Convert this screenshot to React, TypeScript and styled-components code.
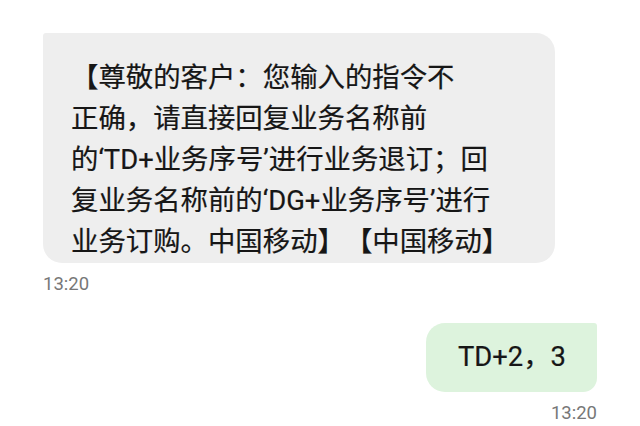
import styled, { createGlobalStyle } from "styled-components";

const GlobalStyle = createGlobalStyle`
  html, body {
    margin: 0;
    padding: 0;
    background: #ffffff;
  }
  body {
    font-family: Roboto, "Noto Sans CJK SC", "Noto Sans", sans-serif;
    -webkit-font-smoothing: antialiased;
  }
`;

const Thread = styled.div`
  display: flex;
  flex-direction: column;
  padding: 33px 43px 0 43px;
  width: 640px;
  height: 426px;
  box-sizing: border-box;
  overflow: hidden;
`;

const Message = styled.div<{ $out?: boolean }>`
  display: flex;
  flex-direction: column;
  align-items: ${(p) => (p.$out ? "flex-end" : "flex-start")};
  gap: 10px;
  margin-top: ${(p) => (p.$out ? "28px" : "0")};
`;

const Bubble = styled.div<{ $out?: boolean }>`
  box-sizing: border-box;
  font-size: 27.4px;
  line-height: 41px;
  color: #161616;
  background: ${(p) => (p.$out ? "#ddf3dd" : "#eeeeee")};
  border-radius: ${(p) => (p.$out ? "19px 3px 14px 19px" : "3px 19px 19px 19px")};
  width: ${(p) => (p.$out ? "auto" : "512px")};
  padding: ${(p) => (p.$out ? "14px 31px 14px 32px" : "25px 28px 0 28px")};
  height: ${(p) => (p.$out ? "69px" : "230px")};
  white-space: nowrap;
  text-spacing-trim: space-all;
  -webkit-text-stroke: 0.2px #161616;
`;

const Time = styled.div`
  font-size: 18.5px;
  line-height: 22px;
  color: #777777;
`;

const incoming = [
  "【尊敬的客户：您输入的指令不",
  "正确，请直接回复业务名称前",
  "的‘TD+业务序号’进行业务退订；回",
  "复业务名称前的‘DG+业务序号’进行",
  "业务订购。中国移动】【中国移动】",
];

export default function App() {
  return (
    <>
      <GlobalStyle />
      <Thread>
        <Message>
          <Bubble>
            {incoming.map((line, i) => (
              <div key={i}>{line}</div>
            ))}
          </Bubble>
          <Time>13:20</Time>
        </Message>
        <Message $out>
          <Bubble $out>TD+2，3</Bubble>
          <Time>13:20</Time>
        </Message>
      </Thread>
    </>
  );
}
